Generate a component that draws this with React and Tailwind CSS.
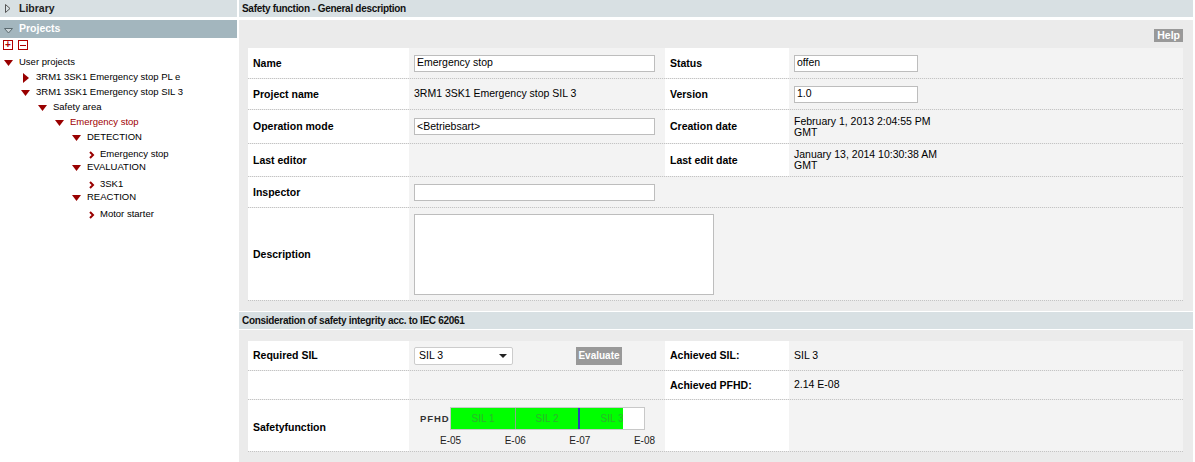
import { useState } from 'react'

const font = { fontFamily: '"Liberation Sans", Arial, sans-serif' }

function TriDown({ className = 'fill-[#990000]' }) {
  return (
    <svg width="9" height="6" viewBox="0 0 9 6" className={className}>
      <path d="M0 0h9L4.5 6z" />
    </svg>
  )
}

function TriRight() {
  return (
    <svg width="6" height="10" viewBox="0 0 6 10" className="fill-[#990000]">
      <path d="M0 0l6 5-6 5z" />
    </svg>
  )
}

function Chevron() {
  return (
    <svg width="6" height="8" viewBox="0 0 6 8" className="fill-none stroke-[#990000]">
      <path d="M1 1l3 3-3 3" strokeWidth="2" />
    </svg>
  )
}

const tree = [
  { level: 0, icon: 'down', text: 'User projects' },
  { level: 1, icon: 'right', text: '3RM1 3SK1 Emergency stop PL e' },
  { level: 1, icon: 'down', text: '3RM1 3SK1 Emergency stop SIL 3' },
  { level: 2, icon: 'down', text: 'Safety area' },
  { level: 3, icon: 'down', text: 'Emergency stop', active: true },
  { level: 4, icon: 'down', text: 'DETECTION' },
  { level: 5, icon: 'leaf', text: 'Emergency stop' },
  { level: 4, icon: 'down', text: 'EVALUATION' },
  { level: 5, icon: 'leaf', text: '3SK1' },
  { level: 4, icon: 'down', text: 'REACTION' },
  { level: 5, icon: 'leaf', text: 'Motor starter' },
]

const indents = ['pl-[4px]', 'pl-[21px]', 'pl-[38px]', 'pl-[55px]', 'pl-[72px]', 'pl-[89px]']

function TreeRow({ item }) {
  const leaf = item.icon === 'leaf'
  return (
    <div className={`flex h-[15px] items-center ${indents[item.level]} ${leaf ? 'mt-[2px] -mb-[2px]' : ''}`}>
      <span className={`flex items-center ${leaf ? 'w-[11px]' : 'w-[15px]'} ${item.icon === 'right' ? 'pl-[2px]' : ''}`}>
        {item.icon === 'down' && <TriDown />}
        {item.icon === 'right' && <TriRight />}
        {leaf && <Chevron />}
      </span>
      <span className={item.active ? 'text-[#a00000]' : 'text-black'}>{item.text}</span>
    </div>
  )
}

function Sidebar() {
  return (
    <aside className="w-[237px] shrink-0 bg-white text-[9.5px]">
      <div className="flex h-[17px] items-center bg-[#d8e0e3] pl-[5px]">
        <svg width="6" height="9" viewBox="0 0 6 9" className="mr-[8px]">
          <path d="M0.5 0.5l4.5 4-4.5 4z" fill="none" stroke="#555" />
        </svg>
        <span className="text-[10.5px] font-bold text-[#222]">Library</span>
      </div>
      <div className="mt-[3px] flex h-[18px] items-center bg-[#a3b6be] pl-[4px]">
        <svg width="9" height="6" viewBox="0 0 9 6" className="mr-[6px] mt-[4px]">
          <path d="M0.5 0.5h8l-4 4.5z" fill="#ccd5d9" stroke="#5a6a70" />
        </svg>
        <span className="text-[10.5px] font-bold text-white">Projects</span>
      </div>
      <div className="mt-[2px] flex gap-[5px] pl-[3px]">
        <span className="flex h-[10px] w-[10px] items-center justify-center border border-[#b00000] text-[10px] leading-none font-bold text-[#b00000]">+</span>
        <span className="flex h-[10px] w-[10px] items-center justify-center border border-[#b00000]">
          <span className="h-[1px] w-[6px] bg-[#b00000]" />
        </span>
      </div>
      <div className="mt-[5px]">
        {tree.map((item, i) => (
          <TreeRow key={i} item={item} />
        ))}
      </div>
    </aside>
  )
}

function Input({ w = 'w-[241px]', value = '' }) {
  return (
    <div className={`flex h-[17px] ${w} items-center border border-[#bdbdbd] bg-white pl-[2px] text-black`}>
      {value}
    </div>
  )
}

function Label({ children, extra = '' }) {
  return <div className={`flex items-center bg-white pl-[5px] pt-[1px] font-bold ${extra}`}>{children}</div>
}

function Value({ children, span }) {
  return <div className={`flex items-center bg-[#f3f3f3] pl-[5px] ${span ? 'col-span-3' : ''}`}>{children}</div>
}

function Row({ children, h }) {
  return (
    <div className={`grid grid-cols-[161px_256px_124px_1fr] border-b border-dotted border-[#c4c4c4] ${h}`}>
      {children}
    </div>
  )
}

function SectionHeader({ children }) {
  return (
    <div className="flex h-[18px] items-center border-b border-white bg-[#d8e0e3] pl-[3px] text-[10px] font-bold tracking-[-0.3px] text-[#111]">
      {children}
    </div>
  )
}

function PfhdBar() {
  return (
    <div className="flex items-start pl-[11px] pt-[7px]">
      <span className="mt-[5px] w-[30px] text-[9.5px] font-bold tracking-[0.9px] text-[#333]">PFHD</span>
      <div className="flex flex-col">
        <div className="flex h-[23px] w-[195px] border border-[#c8c8c8] bg-white">
          <div className="h-full w-[172px] overflow-hidden bg-[#00ff00]">
            <div className="flex h-full w-[193px] text-[10px] text-[#2cb52c]">
              <span className="flex w-[65px] items-center justify-center border-r border-[#8aa88a]">SIL 1</span>
              <span className="flex w-[64px] items-center justify-center border-r-2 border-[#2b3bbd]">SIL 2</span>
              <span className="flex flex-1 items-center justify-center">SIL 3</span>
            </div>
          </div>
        </div>
        <div className="-ml-[10px] mt-[3px] flex w-[215px] justify-between text-[10px] text-[#222]">
          <span>E-05</span>
          <span>E-06</span>
          <span>E-07</span>
          <span>E-08</span>
        </div>
      </div>
    </div>
  )
}

export default function App() {
  const [sil] = useState('SIL 3')
  return (
    <div className="flex h-[462px] w-[1195px] bg-white text-[10.5px] text-black" style={font}>
      <Sidebar />
      <main className="ml-[2px] flex w-[954px] flex-col">
        <div className="mb-[2px]">
          <SectionHeader>Safety function - General description</SectionHeader>
        </div>
        <div className="flex flex-1 flex-col bg-[#ebebeb] pl-[9px] pr-[10px]">
          <div className="flex justify-end pt-[9px]">
            <span className="flex h-[13px] items-center bg-[#999999] px-[3px] text-[10.5px] font-bold text-white">Help</span>
          </div>
          <div className="mt-[6px]">
            <Row h="h-[31px]">
              <Label>Name</Label>
              <Value><Input value="Emergency stop" /></Value>
              <Label>Status</Label>
              <Value><Input w="w-[124px]" value="offen" /></Value>
            </Row>
            <Row h="h-[31px]">
              <Label>Project name</Label>
              <Value>3RM1 3SK1 Emergency stop SIL 3</Value>
              <Label>Version</Label>
              <Value><Input w="w-[124px]" value="1.0" /></Value>
            </Row>
            <Row h="h-[34px]">
              <Label>Operation mode</Label>
              <Value><Input value="<Betriebsart>" /></Value>
              <Label>Creation date</Label>
              <Value>
                <div className="leading-[11px]">February 1, 2013 2:04:55 PM<br />GMT</div>
              </Value>
            </Row>
            <Row h="h-[33px]">
              <Label>Last editor</Label>
              <Value />
              <Label>Last edit date</Label>
              <Value>
                <div className="leading-[11px]">January 13, 2014 10:30:38 AM<br />GMT</div>
              </Value>
            </Row>
            <Row h="h-[31px]">
              <Label>Inspector</Label>
              <Value span><Input /></Value>
            </Row>
            <Row h="h-[93px]">
              <Label>Description</Label>
              <Value span>
                <div className="h-[81px] w-[300px] border border-[#bdbdbd] bg-white" />
              </Value>
            </Row>
          </div>
          <div className="-mx-[9px] mt-[10px] -mr-[10px] border-t border-white">
            <SectionHeader>Consideration of safety integrity acc. to IEC 62061</SectionHeader>
          </div>
          <div className="mt-[11px]">
            <Row h="h-[30px]">
              <Label>Required SIL</Label>
              <Value>
                <div className="flex w-[256px] items-center">
                  <div className="flex h-[18px] w-[99px] items-center justify-between rounded-[2px] border border-[#cccccc] bg-white pl-[4px] pr-[5px]">
                    <span>{sil}</span>
                    <svg width="8" height="4" viewBox="0 0 8 4"><path d="M0 0h8L4 4z" fill="#222" /></svg>
                  </div>
                  <span className="ml-[63px] flex h-[18px] w-[46px] items-center justify-center bg-[#999999] text-[10px] font-bold text-white">Evaluate</span>
                </div>
              </Value>
              <Label>Achieved SIL:</Label>
              <Value>SIL 3</Value>
            </Row>
            <Row h="h-[29px]">
              <Label />
              <Value />
              <Label>Achieved PFHD:</Label>
              <Value>2.14 E-08</Value>
            </Row>
            <Row h="h-[52px]">
              <Label extra="pt-[5px]">Safetyfunction</Label>
              <div className="bg-[#f3f3f3]">
                <PfhdBar />
              </div>
              <Label />
              <Value />
            </Row>
          </div>
        </div>
      </main>
    </div>
  )
}
